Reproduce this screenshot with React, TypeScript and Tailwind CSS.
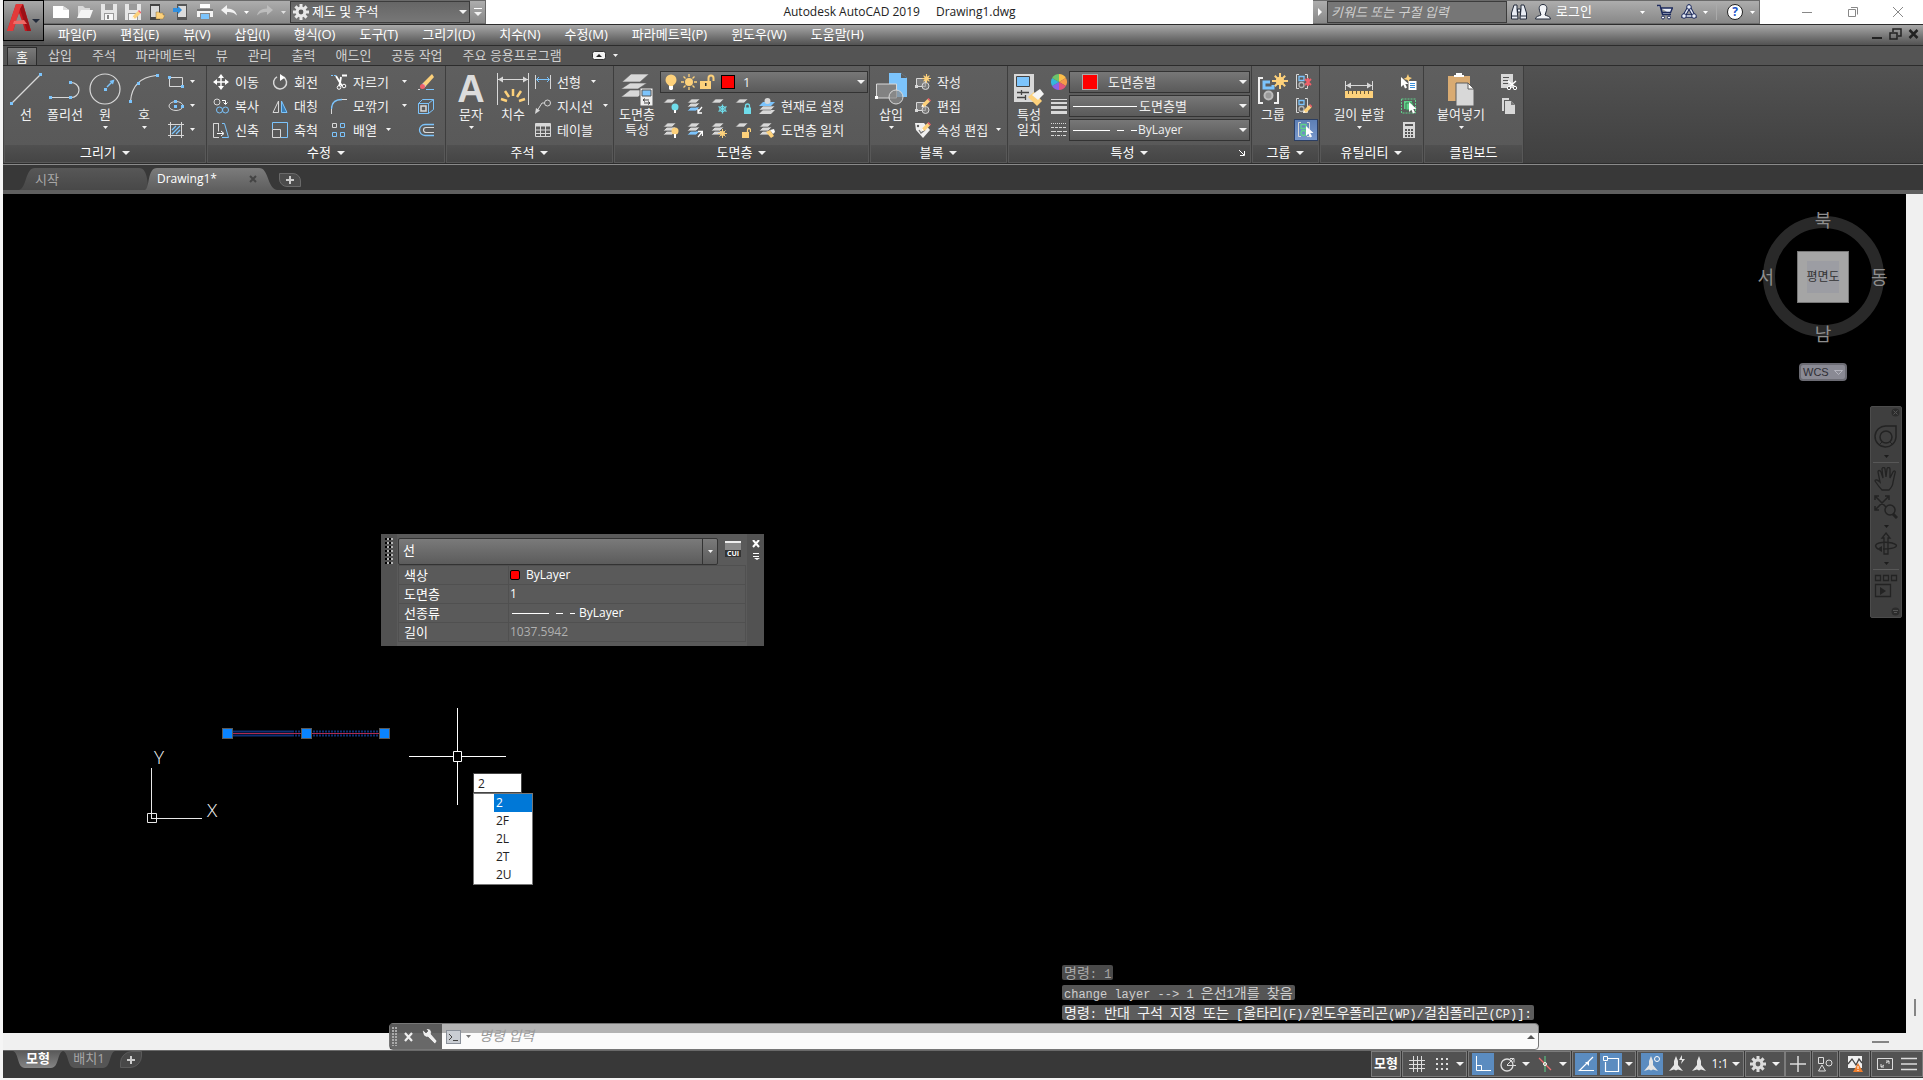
import type { ReactNode } from 'react';
import { clsx } from 'clsx';

const BLUE = '#7cc4fc';
const LIGHT = '#d8d8d8';
const GOLD = '#fdd17b';
const GREEN = '#5fd38a';
const CYAN = '#6fdcea';

/* ---------- drawing helpers ---------- */

function Svg({ w = 16, h = 16, className, children }: { w?: number; h?: number; className?: string; children: ReactNode }) {
  return (
    <svg width={w} height={h} viewBox={`0 0 ${w} ${h}`} fill="none" className={clsx('shrink-0', className)} aria-hidden="true">
      {children}
    </svg>
  );
}

function Caret({ big = false, className = 'text-[#f2f2f2]' }: { big?: boolean; className?: string }) {
  return big ? (
    <Svg w={8} h={4} className={className}><path d="M0 0h8L4 4z" fill="currentColor" /></Svg>
  ) : (
    <Svg w={5} h={3} className={className}><path d="M0 0h5L2.5 3z" fill="currentColor" /></Svg>
  );
}

function Gear({ color = '#f0f0f0', size = 16 }: { color?: string; size?: number }) {
  return (
    <svg width={size} height={size} viewBox="0 0 16 16" className="shrink-0" aria-hidden="true">
      <g stroke={color} strokeWidth="3">
        <path d="M8 0v16M0 8h16M2.4 2.4l11.2 11.2M13.6 2.4L2.4 13.6" />
      </g>
      <circle cx="8" cy="8" r="5.4" fill={color} />
      <circle cx="8" cy="8" r="2.4" fill="#5a5a5a" />
    </svg>
  );
}

function Pencil({ x = 0, y = 0 }: { x?: number; y?: number }) {
  return (
    <g transform={`translate(${x} ${y})`}>
      <path d="M1 6l5-5 2.500 2.500-5 5L0 9z" fill={GOLD} />
      <path d="M6 1l1-1 2.500 2.500-1 1z" fill="#f0606a" />
      <path d="M0 9l.8-2.400L2.600 8.400z" fill="#fff" />
    </g>
  );
}

function Star({ cx, cy, r }: { cx: number; cy: number; r: number }) {
  return (
    <g stroke={GOLD} strokeWidth={r / 4}>
      <path d={`M${cx} ${cy - r}v${2 * r}M${cx - r} ${cy}h${2 * r}`} />
      <path d={`M${cx - r * 0.65} ${cy - r * 0.65}l${r * 1.3} ${r * 1.3}M${cx + r * 0.65} ${cy - r * 0.65}l${-r * 1.3} ${r * 1.3}`} />
      <circle cx={cx} cy={cy} r={r * 0.4} fill={GOLD} />
    </g>
  );
}

function Cursor({ x, y }: { x: number; y: number }) {
  return <path transform={`translate(${x} ${y})`} d="M0 0v10l2.400-2.200L4 11.500l2-.9-1.700-3.600H7.500z" fill="#fff" />;
}

/* Stack of sheets shared by the layer tools. */
function Sheets({ count = 3, blue = false }: { count?: number; blue?: boolean }) {
  return (
    <g>
      {count > 2 && <path d="M4 9h9l-4 4H0z" fill={blue ? BLUE : LIGHT} stroke="#5c5c5c" strokeWidth=".8" />}
      {count > 1 && <path d="M4 5h9l-4 4H0z" fill={LIGHT} stroke="#5c5c5c" strokeWidth=".8" />}
      <path d="M4.500 1H13L9 5H.5z" fill={LIGHT} stroke="#5c5c5c" strokeWidth=".6" />
    </g>
  );
}

/* ---------- quick access toolbar ---------- */

const quickIcons: { label: string; icon: ReactNode }[] = [
  { label: '새로 만들기', icon: <Svg><path d="M0 2h10l6 4v8H0z" fill="#fff" /><path d="M10 2v4h6z" fill="#ddd" /></Svg> },
  { label: '열기', icon: <Svg><path d="M1 14V2h5l2 2h5v2" fill="#d9d9d9" /><path d="M0 14L4 6h12l-3 8z" fill="#f4f4f4" /></Svg> },
  { label: '저장', icon: <Svg><path d="M0 0h16v16H0z" fill="#e6e6e6" /><path d="M4 0h8v6H4zM3 9h10v7H3z" fill="#9a9a9a" /><path d="M4 10h8v6H4z" fill="#f7f7f7" /><path d="M6 11h2v4H6z" fill="#888" /></Svg> },
  { label: '다른 이름으로 저장', icon: <Svg><path d="M0 0h16v16H0z" fill="#e6e6e6" /><path d="M4 0h8v6H4zM3 9h10v7H3z" fill="#9a9a9a" /><path d="M4 10h8v6H4z" fill="#f7f7f7" /><Pencil x={7} y={6} /></Svg> },
  { label: '모바일에서 열기', icon: <Svg><path d="M1 0h10v16H1z" fill="#444" /><path d="M2 2h8v11H2z" fill="#d9d9d9" /><path d="M7 15V8h3l1 1h3v2h2l-2 4z" fill={GOLD} stroke="#8a7040" strokeWidth=".5" /></Svg> },
  { label: '모바일에 저장', icon: <Svg><path d="M4 0h10v16H4z" fill="#555" /><path d="M5 2h8v11H5z" fill="#dcdcdc" /><path d="M0 4h5V2l4 4-4 4V8H0z" fill="#2f8fe0" /></Svg> },
  { label: '플롯', icon: <Svg><path d="M3 0h10v4H3z" fill="#fff" /><path d="M0 5h16v8H0z" fill="#f4f4f4" /><path d="M0 5h16v2H0z" fill="#777" /><path d="M3 9h10v7H3z" fill="#888" /><path d="M4 10h8v5H4z" fill={BLUE} /></Svg> },
];

const undoPath = 'M0 6l6-5v3.500c6 0 9 3 10 7-2.500-2.500-5-3.500-10-3.500V11z';

function TitleBar() {
  return (
    <div className="flex h-6 items-stretch bg-white">
      <div className="flex w-[442px] items-center border-b border-r border-t border-[#6a6a6a] bg-linear-to-b from-[#adadad] to-[#888]">
        <div className="flex items-center gap-2 pl-[9px]">
          {quickIcons.map((q) => (
            <button key={q.label} type="button" aria-label={q.label} className="w-4">{q.icon}</button>
          ))}
          <button type="button" aria-label="명령 취소" className="w-4"><Svg><path d={undoPath} fill="#f2f2f2" /></Svg></button>
        </div>
        <Caret className="ml-[7px] text-white" />
        <button type="button" aria-label="명령 복구" className="ml-2"><Svg><path d={undoPath} transform="matrix(-1 0 0 1 16 0)" fill="#bdbdbd" /></Svg></button>
        <Caret className="ml-2 text-[#e0e0e0]" />
        <label className="ml-1 flex h-[22px] w-[180px] items-center border border-[#3c3c3c] bg-linear-to-b from-[#666] to-[#777] pl-0.5 pr-0.5">
          <Gear color="#e8e8e8" />
          <select aria-label="작업공간" className="ml-[3px] flex-1 appearance-none bg-transparent text-white outline-none">
            <option>제도 및 주석</option>
          </select>
          <Caret big />
        </label>
        <button type="button" aria-label="빠른 접근 도구막대 사용자화" className="flex flex-1 flex-col items-center gap-[3px]">
          <span className="h-px w-2 bg-white" />
          <Caret big />
        </button>
      </div>
      <div className="flex flex-1 items-center justify-center gap-4 text-xs text-[#222]">
        <span>Autodesk AutoCAD 2019</span>
        <span>Drawing1.dwg</span>
      </div>
      <div className="flex w-[447px] items-center border-t border-b border-r border-[#6a6a6a] bg-linear-to-b from-[#adadad] to-[#888]">
        <Svg w={14} h={10}><path d="M5 1v8l4-4z" fill="#fff" /></Svg>
        <input
          type="search"
          aria-label="검색"
          placeholder="키워드 또는 구절 입력"
          className="h-[22px] w-[180px] border border-[#3c3c3c] bg-[#767676] px-[3px] pb-px italic text-white outline-none placeholder:text-[#cfcfcf]"
        />
        <button type="button" aria-label="찾기" className="ml-1">
          <Svg><g fill="#e9edf5" stroke="#222a3a"><path d="M3 1h3v4l1 10H.5V9zM13 1h-3v4L9 15h6.500V9z" /><path d="M6.500 5h3v3h-3z" /></g><path d="M1 12h5M10 12h5" stroke="#222a3a" /></Svg>
        </button>
        <button type="button" className="ml-2 flex items-center gap-[5px] text-white">
          <Svg><path d="M.5 15c0-3 4-3 5.500-4L5 8C3 3 5 .5 8 .5S13 3 11 8l-1 3c1.500 1 5.500 1 5.500 4z" fill="#f2f4f8" stroke="#222a3a" /></Svg>
          로그인
        </button>
        <Caret className="ml-auto text-white" />
        <button type="button" aria-label="앱 스토어" className="ml-3">
          <Svg><path d="M0 1.500h3l2.500 9H14M4 4h11.500l-2 4.500H5z" fill="#e8edf8" stroke="#1d2a5c" strokeWidth="1.400" /><circle cx="6" cy="13.500" r="1.500" fill="#fff" stroke="#1d2a5c" /><circle cx="12" cy="13.500" r="1.500" fill="#fff" stroke="#1d2a5c" /></Svg>
        </button>
        <button type="button" aria-label="연결 유지" className="ml-2">
          <Svg><path d="M8 3L3 12h10z" stroke="#1d2a5c" strokeWidth="3.500" /><path d="M8 3L3 12h10z" stroke="#e8edf8" strokeWidth="1.500" /><g fill="#e8edf8" stroke="#1d2a5c"><circle cx="8" cy="3" r="2.300" /><circle cx="3" cy="12" r="2.300" /><circle cx="13" cy="12" r="2.300" /></g></Svg>
        </button>
        <Caret className="ml-1.5 text-white" />
        <span className="ml-2 h-4 w-px bg-[#aaa]" />
        <button type="button" aria-label="도움말" className="ml-2.5 flex size-4 items-center justify-center rounded-full border border-[#222] bg-white text-xs font-bold text-[#1c54c8]">?</button>
        <Caret className="ml-[7px] mr-1 text-white" />
      </div>
      <div className="flex w-[163px] items-center justify-between pl-[41px] pr-[19px]">
        <button type="button" aria-label="최소화"><Svg w={12} h={12}><path d="M1 6.500h10" stroke="#888" /></Svg></button>
        <button type="button" aria-label="이전 크기로"><Svg w={12} h={12}><path d="M1.500 3.500h7v7h-7z M4 1.500h6.500v7" stroke="#888" /></Svg></button>
        <button type="button" aria-label="닫기"><Svg w={12} h={12}><path d="M1 1l10 10M11 1L1 11" stroke="#888" /></Svg></button>
      </div>
    </div>
  );
}

const menus = ['파일(F)', '편집(E)', '뷰(V)', '삽입(I)', '형식(O)', '도구(T)', '그리기(D)', '치수(N)', '수정(M)', '파라메트릭(P)', '윈도우(W)', '도움말(H)'];

function Header() {
  return (
    <header className="relative flex border-b border-[#2c2c2c] bg-[#545454]">
      <button type="button" aria-label="응용프로그램 메뉴" className="z-10 flex h-[41px] w-[41px] shrink-0 items-center gap-1 border border-black bg-linear-to-b from-[#a8a8a8] to-[#5c5c5c] pb-1.5 pl-[3px]">
        <Svg w={25} h={30}>
          <path d="M0 28L9 1h7l8 27h-6l-2-7-7-2-3 9z" fill="#c8181f" />
          <path d="M9 1h7l-3 5-7 22H0z" fill="#e23a3a" />
          <path d="M16 1l8 27h-4L13 6z" fill="#9c1016" />
          <path d="M12 10l3 8H9z" fill="#8c8c8c" />
          <path d="M7 18l10-1 3 4H6z" fill="#ef6a66" />
        </Svg>
        <Caret big className="-ml-1 mt-1.5 text-[#222a3a]" />
      </button>
      <div className="flex min-w-0 flex-1 flex-col">
        <TitleBar />
        <nav className="flex h-[21px] items-center gap-6 border-t border-[#2c2c2c] bg-linear-to-b from-[#a9a9a9] to-[#525252] pb-0.5 pl-3.5 pr-1 leading-[18px] text-white">
          {menus.map((m) => (
            <button key={m} type="button" className="whitespace-nowrap">{m}</button>
          ))}
          <div className="ml-auto flex items-center gap-1.5">
            <button type="button" aria-label="도면 최소화"><Svg w={11} h={12}><path d="M0 9h10v2H0z" fill="#222" /></Svg></button>
            <button type="button" aria-label="도면 이전 크기로"><Svg w={13} h={12}><path d="M1 5h7v6H1zM4 4V1h8v7H9" stroke="#222" strokeWidth="1.500" /></Svg></button>
            <button type="button" aria-label="도면 닫기"><Svg w={11} h={12}><path d="M1.500 2l8 8M9.500 2l-8 8" stroke="#222" strokeWidth="2.500" /></Svg></button>
          </div>
        </nav>
      </div>
    </header>
  );
}

const ribbonTabs = ['삽입', '주석', '파라메트릭', '뷰', '관리', '출력', '애드인', '공동 작업', '주요 응용프로그램'];

function RibbonTabs() {
  return (
    <div role="tablist" className="flex h-5 items-center border-b border-[#2c2c2c] bg-[#545454] pl-1 leading-[18px] text-[#d0d0d0]">
      <button type="button" role="tab" aria-selected="true" className="h-[18px] w-[30px] self-end border border-b-0 border-[#2c2c2c] bg-linear-to-b from-[#7a7a7a] to-[#5c5c5c] leading-[14px] text-white">홈</button>
      <div className="ml-[11px] flex gap-5 pb-0.5">
        {ribbonTabs.map((t) => (
          <button key={t} type="button" role="tab" aria-selected="false" className="whitespace-nowrap">{t}</button>
        ))}
      </div>
      <button type="button" aria-label="리본 최소화" className="ml-[30px] flex items-center gap-[7px]">
        <Svg w={14} h={9}><rect x=".5" y=".5" width="13" height="8" rx="2" fill="#f2f2f2" stroke="#333" /><path d="M4 6l3-3 3 3z" fill="#222" /></Svg>
        <Caret />
      </button>
    </div>
  );
}

/* ---------- ribbon ---------- */

function Panel({ title, width, caret = true, corner = false, children }: { title: string; width: string; caret?: boolean; corner?: boolean; children: ReactNode }) {
  return (
    <section className={clsx('flex shrink-0 flex-col border-r border-[#3e3e3e]', width)}>
      <div className="flex h-[79px] bg-linear-to-b from-[#5f5f5f] to-[#595959] pt-1">{children}</div>
      <div className="flex h-[18px] items-center border border-t-0 border-[#585858] bg-linear-to-b from-[#505050] to-[#454545] pb-0.5 text-white">
        <span className="w-3" />
        <button type="button" className="flex flex-1 items-center justify-center gap-1.5 leading-[15px]">
          {title}
          {caret && <Caret big />}
        </button>
        <span className="w-3">
          {corner && <Svg w={8} h={8}><path d="M1 1l5 5M6.500 2v4.500H2" stroke="#fff" /></Svg>}
        </span>
      </div>
    </section>
  );
}

function BigTool({ icon, lines, caret = false, width }: { icon: ReactNode; lines: string[]; caret?: boolean; width: string }) {
  return (
    <button type="button" className={clsx('flex shrink-0 flex-col items-center text-[#f2f2f2]', width)}>
      <span className="flex h-[37px] items-center">{icon}</span>
      {lines.map((l) => (
        <span key={l} className="whitespace-nowrap leading-[15px]">{l}</span>
      ))}
      {caret && <Caret className="mt-1" />}
    </button>
  );
}

function Tool({ icon, label, name, caret = false, gap = 'gap-3' }: { icon: ReactNode; label?: string; name?: string; caret?: boolean; gap?: string }) {
  return (
    <button type="button" aria-label={label ?? name} className="flex h-6 items-center gap-1.5 whitespace-nowrap leading-4 text-[#f2f2f2]">
      {icon}
      <span className={clsx('flex items-center pb-px', gap)}>
        {label}
        {caret && <Caret />}
      </span>
    </button>
  );
}

function Dot({ x, y, color = BLUE }: { x: number; y: number; color?: string }) {
  return <rect x={x} y={y} width="3" height="3" fill={color} />;
}

function DrawPanel() {
  return (
    <Panel title="그리기" width="w-[203px]">
      <BigTool width="w-10 pl-1" lines={['선']} icon={<Svg w={32} h={32}><path d="M2.500 29.500l27-27" stroke={LIGHT} strokeWidth="1.200" /><Dot x={0} y={29} /><Dot x={29} y={0} /></Svg>} />
      <BigTool width="w-[42px]" lines={['폴리선']} icon={<Svg w={32} h={32}><path d="M2 24.500h20M22 9.500c4 0 8 3 8 7.500s-4 7.500-8 7.500" stroke={LIGHT} strokeWidth="1.200" /><Dot x={0} y={23} /><Dot x={20} y={23} /><Dot x={20} y={8} /></Svg>} />
      <BigTool width="w-[38px]" caret lines={['원']} icon={<Svg w={32} h={32}><circle cx="16" cy="16" r="15" stroke={LIGHT} strokeWidth="1.200" /><path d="M18 14l6-6" stroke={BLUE} strokeWidth="1.500" /><path d="M25.500 6.500l-5 1.500 3.500 3.500z" fill={BLUE} /><Dot x={15} y={15} /></Svg>} />
      <BigTool width="w-10" caret lines={['호']} icon={<Svg w={32} h={32}><path d="M2.500 28C4 12 14 4 28 2.500" stroke={LIGHT} strokeWidth="1.200" /><Dot x={1} y={27} /><Dot x={9} y={9} /><Dot x={28} y={1} /></Svg>} />
      <div className="ml-1 flex flex-col">
        <Tool name="직사각형" caret icon={<Svg><path d="M1.500 3.500h13v9h-13z" stroke={LIGHT} /><Dot x={0} y={2} /><Dot x={13} y={11} /></Svg>} />
        <Tool name="타원" caret icon={<Svg><ellipse cx="8" cy="8" rx="7" ry="4.500" stroke={LIGHT} /><Dot x={6} y={7} /><Dot x={6} y={2} /><Dot x={13} y={7} /></Svg>} />
        <Tool name="해치" caret icon={<Svg><path d="M2.500 0v16M13.500 0v16M0 2.500h16M0 13.500h16" stroke={LIGHT} /><path d="M4 8l4-4M4 12l8-8M8 12l4-4" stroke={BLUE} strokeWidth="1.300" /></Svg>} />
      </div>
    </Panel>
  );
}

function ModifyPanel() {
  return (
    <Panel title="수정" width="w-[239px]">
      <div className="ml-1.5 grid grid-cols-[59px_59px_87px_16px] content-start">
        <Tool label="이동" icon={<Svg><path d="M8 2v12M2 8h12" stroke="#fff" strokeWidth="1.400" /><path d="M8 0l3 4H5zM8 16l3-4H5zM0 8l4-3v6zM16 8l-4-3v6z" fill="#fff" /></Svg>} />
        <Tool label="회전" icon={<Svg><path d="M11.500 3A6.500 6.500 0 1 1 5 2.800" stroke={LIGHT} strokeWidth="1.500" /><path d="M8 0l5 3.500L8 7z" fill="#fff" /></Svg>} />
        <Tool label="자르기" caret gap="gap-[13px]" icon={<Svg><path d="M0 1.500h6" stroke={BLUE} strokeDasharray="2 1" /><path d="M11 1.500h5M5 2l6 10M10 3L9 9l-1 3" stroke="#fff" strokeWidth="1.800" /><circle cx="8" cy="13.500" r="1.800" stroke="#fff" /><circle cx="13" cy="12" r="1.800" stroke="#fff" /></Svg>} />
        <Tool name="지우기" icon={<Svg><path d="M5 9L14 0l2 3-8 9z" fill={GOLD} /><path d="M5 9l3 3-2 2-3-2z" fill="#fff" /><circle cx="4.500" cy="12.500" r="2.500" fill="#f0606a" /><path d="M8 15.500h8" stroke={BLUE} /><path d="M0 15.500h2" stroke={LIGHT} /></Svg>} />
        <Tool label="복사" icon={<Svg><circle cx="4" cy="4" r="3" stroke={LIGHT} /><circle cx="6.500" cy="12" r="3" stroke={BLUE} /><circle cx="12.500" cy="12" r="3" stroke={BLUE} /><path d="M9 2.500h3.500V6M10.500 4.500l2 2 2-2" stroke="#fff" /></Svg>} />
        <Tool label="대칭" icon={<Svg><path d="M6.500 3v11.500H1z" stroke={LIGHT} /><path d="M9.500 3v11.500H15z" fill="#3d7fb5" stroke={BLUE} /></Svg>} />
        <Tool label="모깎기" caret gap="gap-[13px]" icon={<Svg><path d="M.5 16v-5M11 1.500h5" stroke={LIGHT} /><path d="M.5 11C.5 5 4 1.500 11 1.500" stroke={BLUE} strokeWidth="1.300" /></Svg>} />
        <Tool name="분해" icon={<Svg><path d="M.5 5.500h10v10H.5z" stroke={BLUE} /><path d="M3 8h5v5H3z" stroke={LIGHT} strokeWidth="1.500" /><path d="M.5 5.500l4-4h11l-5 4M15.500 1.500v10l-5 4" stroke={BLUE} /></Svg>} />
        <Tool label="신축" icon={<Svg><path d="M6 1.500H.5v14H6M.5 1.500h5v8" stroke={LIGHT} /><path d="M9 1.500h2.500l4 14H9" stroke={BLUE} /><path d="M4 11.500h6M8 9l3 2.500L8 14" stroke="#fff" /></Svg>} />
        <Tool label="축척" icon={<Svg><path d="M.5 7V.5h15v15H9" stroke={BLUE} /><path d="M.5 7.500h8v8h-8z" stroke={LIGHT} /></Svg>} />
        <Tool label="배열" caret gap="gap-[9px]" icon={<Svg><path d="M1.500 1.500h4v4h-4z" stroke={LIGHT} /><path d="M9.500 1.500h4v4h-4zM1.500 10.500h4v4h-4zM9.500 10.500h4v4h-4z" stroke={BLUE} /></Svg>} />
        <Tool name="간격띄우기" icon={<Svg><path d="M16 2.500H7a5.500 5.500 0 0 0 0 11h9" stroke={BLUE} strokeWidth="1.300" /><path d="M16 5.500H8a2.500 2.500 0 0 0 0 5h8" stroke={LIGHT} strokeWidth="1.200" /></Svg>} />
      </div>
    </Panel>
  );
}

function AnnotatePanel() {
  return (
    <Panel title="주석" width="w-[168px]">
      <BigTool width="w-[50px]" caret lines={['문자']} icon={<span className="font-['Liberation_Sans',sans-serif] text-[38px] font-bold leading-none text-[#dcdcdc]">A</span>} />
      <BigTool width="w-[34px]" lines={['치수']} icon={<Svg w={32} h={32}><path d="M.5 0v32M31.500 0v32M1 6.500h30" stroke={LIGHT} /><path d="M1 6.500l5-3v6zM31 6.500l-5-3v6z" fill={LIGHT} /><path d="M16 16v7M8 18l4 6M24 18l-4 6M4 26l6 2M28 26l-6 2" stroke={GOLD} strokeWidth="2.500" /></Svg>} />
      <div className="ml-[5px] flex flex-col">
        <Tool label="선형" caret gap="gap-2.5" icon={<Svg><path d="M.5 1v14M15.500 1v14" stroke={LIGHT} /><path d="M2 5.500h12M4 3L1.500 5.500 4 8M12 3l2.500 2.500L12 8" stroke={BLUE} /></Svg>} />
        <Tool label="지시선" caret gap="gap-2.5" icon={<Svg><circle cx="12.500" cy="5" r="3" stroke={LIGHT} /><path d="M9.500 5H7L2 13" stroke={LIGHT} /><path d="M0 16l1-6 4 2.500z" fill={LIGHT} /></Svg>} />
        <Tool label="테이블" icon={<Svg><path d="M.5 1.500h15v13H.5z" stroke={LIGHT} /><path d="M1 2h14v2.500H1z" fill={LIGHT} /><path d="M1 8h14M1 11.500h14M5.500 4v10M10.500 4v10" stroke={LIGHT} /></Svg>} />
      </div>
    </Panel>
  );
}

function Bulb() {
  return (
    <Svg>
      <circle cx="8" cy="6" r="5.500" fill={GOLD} /><path d="M5 9h6l-1 3H6z" fill={GOLD} /><path d="M6 12h4v3l-1 1H7l-1-1z" fill="#fff" />
    </Svg>
  );
}

const layerTools: { name: string; icon: ReactNode }[][] = [
  [
    { name: '끄기', icon: <Svg><Sheets count={1} /><circle cx="12" cy="9" r="3.500" fill={CYAN} /><path d="M11 12h2v3h-2z" fill="#fff" /></Svg> },
    { name: '분리', icon: <Svg><Sheets blue /><path d="M15 9l-4 5M11 11v4h4" stroke="#fff" strokeWidth="1.300" /></Svg> },
    { name: '동결', icon: <Svg><Sheets count={1} /><path d="M11.500 6.500v9M7.500 8.500l8 5M15.500 8.500l-8 5" stroke={CYAN} strokeWidth="1.300" /><circle cx="11.500" cy="11" r="2.800" stroke={CYAN} /></Svg> },
    { name: '잠금', icon: <Svg><Sheets count={1} /><path d="M9 9.500h7V16H9z" fill={CYAN} /><path d="M10.500 10V8a2 2 0 0 1 4 0v2" stroke={CYAN} strokeWidth="1.300" /></Svg> },
  ],
  [
    { name: '켜기', icon: <Svg><Sheets /><circle cx="12" cy="9" r="3.500" fill={GOLD} /><path d="M11 12h2v4h-2z" fill="#fff" /></Svg> },
    { name: '분리 해제', icon: <Svg><Sheets blue /><path d="M11 15l4-5M11 9.500h4.500V14" stroke="#fff" strokeWidth="1.300" /></Svg> },
    { name: '동결 해제', icon: <Svg><Sheets /><path d="M11.500 7v9M7 11.500h9M8.500 8.500l6 6M14.500 8.500l-6 6" stroke={GOLD} /><circle cx="11.500" cy="11.500" r="2.500" fill={GOLD} /></Svg> },
    { name: '잠금 해제', icon: <Svg><Sheets count={1} /><path d="M7 10h7v6H7z" fill={GOLD} /><path d="M12.500 10V8a1.500 1.500 0 0 1 3 0v2" stroke={GOLD} strokeWidth="1.300" /></Svg> },
  ],
];

function ComboBox({ label, lead, value, className, indent = 'pl-1' }: { label: string; lead: ReactNode; value: string; className: string; indent?: string }) {
  return (
    <label className={clsx('flex h-[22px] items-center border border-[#333] bg-linear-to-b from-[#777] to-[#5a5a5a] pr-0.5 text-[#f0f0f0]', className)}>
      {lead}
      <select aria-label={label} className={clsx('min-w-0 flex-1 appearance-none bg-transparent pb-px leading-[18px] outline-none', indent)}>
        <option>{value}</option>
      </select>
      <Caret big />
    </label>
  );
}

function LayerPanel() {
  return (
    <Panel title="도면층" width="w-64">
      <BigTool
        width="w-[46px]"
        lines={['도면층', '특성']}
        icon={<Svg w={34} h={34}><path d="M11 2h18l-9 8H2zM10 11h17l-9 6H1zM10 18h17l-9 7H1z" fill={LIGHT} stroke="#5c5c5c" strokeWidth=".6" /><path d="M20 16h13v18H20z" fill="#f0f0f0" stroke="#5c5c5c" /><path d="M22 18h9v6h-9z" fill={BLUE} stroke="#555" /><path d="M23 28h6M24 31h6M25 26.500L23 28l2 1.500M28 29.500l2 1.500-2 1.500" stroke="#444" /></Svg>}
      />
      <div className="flex flex-col">
        <ComboBox
          label="도면층"
          value="1"
          indent="pl-2"
          className="mb-px mt-px w-[208px] pl-0.5"
          lead={
            <span className="flex items-center gap-0.5">
              <Bulb />
              <Svg><circle cx="8" cy="8" r="4" fill={GOLD} /><path d="M8 0v3M8 13v3M0 8h3M13 8h3M2.500 2.500l2 2M11.500 11.500l2 2M13.500 2.500l-2 2M4.500 11.500l-2 2" stroke={GOLD} strokeWidth="1.300" /></Svg>
              <Svg><path d="M1 7h11v8H1z" fill={GOLD} /><path d="M9.500 7V4a2.500 2.500 0 0 1 5 0v3" stroke={GOLD} strokeWidth="2" /><path d="M6 9h1.500v3H6z" fill="#333" /></Svg>
              <span className="ml-1 size-3.5 border border-black bg-[#ff0000]" />
            </span>
          }
        />
        {layerTools.map((row, i) => (
          <div key={row[0].name} className="flex items-center gap-2 pl-[3px]">
            {row.map((t) => (
              <button key={t.name} type="button" aria-label={t.name}>{t.icon}</button>
            ))}
            {i === 0 ? (
              <Tool label="현재로 설정" icon={<Svg><path d="M4 12h12l-4 4H0z" fill={LIGHT} /><path d="M4 8h12l-4 4H0z" fill={LIGHT} stroke="#5c5c5c" strokeWidth=".6" /><path d="M4 4h12l-4 4H0z" fill={BLUE} /><circle cx="8.500" cy="3" r="3" fill={LIGHT} /></Svg>} />
            ) : (
              <Tool label="도면층 일치" icon={<Svg><Sheets /><path d="M7 10l4-2 4 6-3 2z" fill={GOLD} /><path d="M11 8l4-1 1 3-2 2z" fill="#fff" /></Svg>} />
            )}
          </div>
        ))}
      </div>
    </Panel>
  );
}

function MiniBlock({ extra }: { extra: ReactNode }) {
  return <Svg><path d="M1.500 4.500h9v8h-9z" fill="#7d7d7d" stroke={LIGHT} /><circle cx="10.500" cy="12" r="3.500" fill="#8a8a8a" fillOpacity=".6" stroke={LIGHT} /><path d="M0 11h3v3H0z" fill={LIGHT} />{extra}</Svg>;
}

function BlockPanel() {
  return (
    <Panel title="블록" width="w-[138px]">
      <BigTool
        width="w-[42px]"
        caret
        lines={['삽입']}
        icon={<Svg w={32} h={34}><path d="M14 1h12l6 5v19H14z" fill={BLUE} /><path d="M26 1v5h6z" fill="#5c5c5c" /><path d="M1.500 12h20v14h-20z" fill="#828282" stroke={LIGHT} /><circle cx="21" cy="25" r="7" fill="#8a8a8a" fillOpacity=".7" stroke={LIGHT} /><path d="M0 24h3v3H0z" fill="#fff" /></Svg>}
      />
      <div className="ml-[3px] flex flex-col">
        <Tool label="작성" icon={<MiniBlock extra={<Star cx={11.5} cy={4.5} r={4.5} />} />} />
        <Tool label="편집" icon={<MiniBlock extra={<Pencil x={6.5} y={0} />} />} />
        <Tool label="속성 편집" caret gap="gap-2" icon={<Svg><path d="M0 1h9l6 7-7 8-7-8z" fill="#f0f0f0" /><circle cx="3" cy="4" r="1.200" fill="#5c5c5c" /><path d="M4 8l2 3 4-3" stroke="#777" strokeWidth="1.300" /><Pencil x={6.5} y={0} /></Svg>} />
      </div>
    </Panel>
  );
}

function PropertiesPanel() {
  return (
    <Panel title="특성" width="w-[244px]" corner>
      <BigTool
        width="w-[42px]"
        lines={['특성', '일치']}
        icon={<Svg w={32} h={34}><path d="M1 2h20v28H1z" fill={LIGHT} /><path d="M3.500 4.500h13v10h-13z" fill={BLUE} stroke="#444" /><path d="M4 20.500h12M4 25.500h8M8.500 18v5M12.500 23v5" stroke="#444" strokeWidth="1.300" /><path d="M15 25l6-5 8 9-5 5z" fill={GOLD} /><path d="M19 23l5-4 3-2 4 5-6 6z" fill="#f4f4f4" /></Svg>}
      />
      <div className="ml-px grid content-start">
        <div className="flex h-6 items-center gap-0.5">
          <Svg>
            <path d="M8 8V0a8 8 0 0 1 6.900 4z" fill="#fbbd4a" /><path d="M8 8l6.900-4a8 8 0 0 1 0 8z" fill="#f59a4a" /><path d="M8 8l6.900 4A8 8 0 0 1 8 16z" fill="#e2557a" />
            <path d="M8 8v8a8 8 0 0 1-6.900-4z" fill="#8a62e8" /><path d="M8 8L1.100 12a8 8 0 0 1 0-8z" fill="#35b7dd" /><path d="M8 8L1.100 4A8 8 0 0 1 8 0z" fill="#6cc46a" />
          </Svg>
          <ComboBox label="객체 색상" value="도면층별" className="w-[181px]" indent="pl-2.5" lead={<span className="ml-3 size-4 border border-[#aaa] bg-[#ff0000]" />} />
        </div>
        <div className="flex h-6 items-center gap-0.5">
          <Svg><path d="M0 1.500h16" stroke={LIGHT} /><path d="M0 5h16" stroke={LIGHT} strokeWidth="2" /><path d="M0 9.500h16" stroke={LIGHT} strokeWidth="3" /><path d="M0 14.500h16" stroke={LIGHT} strokeWidth="3" /></Svg>
          <ComboBox label="선가중치" value="도면층별" className="w-[181px]" indent="pl-0.5" lead={<span className="ml-[3px] h-px w-16 bg-white" />} />
        </div>
        <div className="flex h-6 items-center gap-0.5">
          <Svg><path d="M0 1.500h16" stroke={LIGHT} strokeDasharray="1 1" /><path d="M0 5.500h16" stroke={LIGHT} strokeDasharray="3 1" /><path d="M0 9.500h16" stroke={LIGHT} strokeDasharray="5 1" /><path d="M0 13.500h16" stroke={LIGHT} strokeDasharray="3 1 1 1" /></Svg>
          <ComboBox label="선종류" value="ByLayer" className="w-[181px] text-xs" indent="pl-px" lead={<Svg w={64} h={3} className="ml-[3px]"><path d="M0 1.500h37M44 1.500h7M58 1.500h6" stroke="#fff" /></Svg>} />
        </div>
      </div>
    </Panel>
  );
}

function GroupGlyph({ color, extra }: { color: string; extra: ReactNode }) {
  return <Svg><path d="M3 .5H.5v14H3M9 .5h2.500v14H9" stroke={LIGHT} /><path d="M3 2.500h5v4H3z" stroke={color} strokeWidth="1.300" /><circle cx="5.500" cy="11" r="2.500" stroke={color === BLUE ? '#b5b5b5' : color} strokeWidth="1.300" />{extra}</Svg>;
}

function GroupPanel() {
  return (
    <Panel title="그룹" width="w-[68px]">
      <BigTool
        width="w-[42px]"
        lines={['그룹']}
        icon={<Svg w={32} h={34}><path d="M6 6H2v25h4M17 31h4V20" stroke="#f0f0f0" strokeWidth="2" /><path d="M13 10H7v6h9v-3" stroke={BLUE} strokeWidth="3" /><circle cx="11.500" cy="23.500" r="4" fill="#999" stroke="#bbb" strokeWidth="2" /><Star cx={23} cy={9} r={8} /></Svg>}
      />
      <div className="flex flex-col">
        <div className="pl-0.5"><Tool name="그룹 해제" icon={<GroupGlyph color={BLUE} extra={<path d="M9 5l6 6M15 5l-6 6M12 4v8" stroke="#f0606a" strokeWidth="1.800" />} />} /></div>
        <div className="pl-0.5"><Tool name="그룹 편집" icon={<GroupGlyph color={BLUE} extra={<Pencil x={7} y={6} />} />} /></div>
        <button type="button" aria-label="그룹 선택 켜기/끄기" aria-pressed="true" className="mt-px flex h-[22px] w-6 items-center justify-center border border-[#2c3f63] bg-linear-to-b from-[#5d7fb5] to-[#7898cc]">
          <GroupGlyph color={GREEN} extra={<Cursor x={8} y={4} />} />
        </button>
      </div>
    </Panel>
  );
}

function UtilityPanel() {
  return (
    <Panel title="유틸리티" width="w-[104px]">
      <BigTool
        width="w-[78px]"
        caret
        lines={['길이 분할']}
        icon={<Svg w={30} h={20}><path d="M1.500 2v9M28.500 2v9M2 6.500h26" stroke={LIGHT} /><path d="M2 6.500l5-3v6zM28 6.500l-5-3v6z" fill={LIGHT} /><path d="M1 12h28v7H1z" fill={GOLD} /><path d="M4.500 12v3M8.500 12v3M12.500 12v3M16.500 12v3M20.500 12v3M24.500 12v3" stroke="#6a5a3a" /></Svg>}
      />
      <div className="ml-[3px] flex flex-col">
        <Tool name="신속 선택" icon={<Svg><path d="M7 0L5.500 3.500 2.500 5l4 1 1 2 1-2.500L11 4 8 3z" fill={GOLD} /><path d="M7.500 7h8v9h-8z" fill="#fff" /><path d="M9 9.500h5M9 11.500h5M9 13.500h5" stroke="#3b8fd9" /><Cursor x={0} y={3} /></Svg>} />
        <Tool name="모두 선택" icon={<Svg><path d="M.5 1h14v14H.5z" stroke={GREEN} strokeDasharray="2 1" /><path d="M3 3h8v8H3z" fill={GREEN} /><path d="M5 5h7v7H5z" fill={GREEN} stroke="#3f7a55" /><Cursor x={8} y={4} /></Svg>} />
        <Tool name="빠른 계산기" icon={<Svg><path d="M2 0h12v16H2z" fill={LIGHT} /><path d="M4 2h8v2H4z" fill="#555" /><path d="M4 7h2v2H4zM7 7h2v2H7zM10 7h2v2h-2zM4 10h2v2H4zM7 10h2v2H7zM10 10h2v2h-2zM4 13h2v2H4zM7 13h2v2H7zM10 13h2v2h-2z" fill="#555" /></Svg>} />
      </div>
    </Panel>
  );
}

function ClipboardPanel() {
  return (
    <Panel title="클립보드" width="w-[100px]" caret={false}>
      <BigTool
        width="w-[74px]"
        caret
        lines={['붙여넣기']}
        icon={<Svg w={28} h={34}><path d="M1 4h22v25H1z" fill="#d9ab72" /><path d="M7 5h10V3h-2V1h-6v2H7z" fill="#fff" /><path d="M9 11h12l6 6v17H9z" fill={LIGHT} stroke="#5c5c5c" /><path d="M21 11v6h6z" fill="#fff" stroke="#5c5c5c" /></Svg>}
      />
      <div className="ml-[3px] flex flex-col">
        <Tool name="잘라내기" icon={<Svg><path d="M0 0h12v14H0z" fill={LIGHT} /><path d="M2 3.500h6M2 6.500h5M2 9.500h5" stroke="#555" /><path d="M7 7l8 7M15 7l-8 7" stroke="#fff" strokeWidth="1.500" /><circle cx="8" cy="14" r="1.700" fill="#5c5c5c" stroke="#fff" /><circle cx="14" cy="14" r="1.700" fill="#5c5c5c" stroke="#fff" /></Svg>} />
        <Tool name="클립보드로 복사" icon={<Svg><path d="M1 0h7v2H3v11H1z" fill={LIGHT} /><path d="M4 3h6l4 4v9H4z" fill={LIGHT} /><path d="M10 3v4h4z" fill="#777" /></Svg>} />
      </div>
    </Panel>
  );
}

function Ribbon() {
  return (
    <div className="border-b border-[#8a8a8a]">
      <div className="flex border-b border-[#2c2c2c] bg-linear-to-b from-[#525252] to-[#404040] pl-px">
        <DrawPanel />
        <ModifyPanel />
        <AnnotatePanel />
        <LayerPanel />
        <BlockPanel />
        <PropertiesPanel />
        <GroupPanel />
        <UtilityPanel />
        <ClipboardPanel />
      </div>
    </div>
  );
}

function FileTabs() {
  return (
    <div role="tablist" className="flex h-[29px] items-end border-b-4 border-[#5f5f5f] bg-[#383838] pl-4">
      <button type="button" role="tab" aria-selected="false" className="h-[22px] w-[130px] bg-linear-to-b from-[#575757] to-[#484848] pl-4 text-left leading-5 text-[#a8a8a8] [clip-path:path('M0,22C8,20_6,0_16,0H120C130,0_128,20_130,22Z')]">시작</button>
      <div className="-ml-1 flex h-[22px] w-[132px] items-center bg-linear-to-b from-[#7c7c7c] to-[#5f5f5f] pl-3 pr-5 text-xs text-white [clip-path:path('M0,22C5,20_2,0_12,0H114C124,0_122,20_132,22Z')]">
        <button type="button" role="tab" aria-selected="true">Drawing1*</button>
        <button type="button" aria-label="탭 닫기" className="ml-auto"><Svg w={8} h={8}><path d="M1 1l6 6M7 1L1 7" stroke="#444" strokeWidth="2" /></Svg></button>
      </div>
      <button type="button" aria-label="새 도면" className="mb-[3px] ml-0.5 flex h-3.5 w-[22px] items-center justify-center rounded-bl-lg rounded-tr-lg border border-[#6a6a6a] bg-[#4c4c4c]">
        <Svg w={8} h={8}><path d="M4 0v8M0 4h8" stroke="#ccc" strokeWidth="2" /></Svg>
      </button>
    </div>
  );
}

/* ---------- drawing area ---------- */

const paletteRows: { name: string; value: ReactNode; muted?: boolean }[] = [
  { name: '색상', value: <><span className="mr-1.5 size-2.5 rounded-xs border border-black bg-[#ff0000]" />ByLayer</> },
  { name: '도면층', value: '1' },
  { name: '선종류', value: <><Svg w={63} h={3} className="ml-0.5 mr-1"><path d="M0 1.500h37M44 1.500h7M58 1.500h5" stroke="#fff" /></Svg>ByLayer</> },
  { name: '길이', value: '1037.5942', muted: true },
];

function QuickProperties() {
  return (
    <section aria-label="빠른 특성" className="absolute left-[378px] top-[340px] flex h-28 w-[383px] bg-[#525252] text-white">
      <div className="flex w-4 justify-center pt-1">
        <Svg w={8} h={27}>
          <path d="M1 0v27M5 0v27" stroke="#000" strokeWidth="2" strokeDasharray="2 2" />
          <path d="M3 0v27M7 0v27" stroke="#b5b5b5" strokeWidth="2" strokeDasharray="2 2" />
        </Svg>
      </div>
      <div className="w-[350px] bg-[#5a5a5a] px-px pt-1">
        <div className="flex items-start">
          <label className="flex h-[27px] w-[320px] items-center rounded-xs border border-[#333] bg-linear-to-b from-[#7a7a7a] to-[#5c5c5c]">
            <select aria-label="객체 유형" className="flex-1 appearance-none self-stretch border-r border-[#333] bg-transparent pb-0.5 pl-1 outline-none">
              <option>선</option>
            </select>
            <span className="flex w-3.5 justify-center"><Caret /></span>
          </label>
          <button type="button" aria-label="사용자화" className="ml-[7px] mt-[3px] flex size-4 flex-col justify-end border-t-2 border-[#eee] bg-[#8a8a8a]">
            <span className="bg-[#333] text-center text-[7px] font-bold leading-[7px]">CUI</span>
          </button>
        </div>
        <table className="w-full border-collapse border border-[#505050]">
          <tbody>
            {paletteRows.map((r) => (
              <tr key={r.name} className="h-[19px] border-b border-[#505050]">
                <th scope="row" className="w-[110px] border-r border-[#505050] p-0 pl-[5px] text-left font-normal leading-[18px]">{r.name}</th>
                <td className={clsx('p-0 pl-px text-xs leading-[18px]', r.muted && 'text-[#b0b0b0]')}>
                  <span className="flex items-center">{r.value}</span>
                </td>
              </tr>
            ))}
          </tbody>
        </table>
      </div>
      <div className="flex flex-1 flex-col items-center gap-1 pt-1.5">
        <button type="button" aria-label="닫기"><Svg w={8} h={8}><path d="M1 0l6 7M7 0L1 7" stroke="#fff" strokeWidth="2" /></Svg></button>
        <button type="button" aria-label="옵션"><Svg w={8} h={8}><path d="M1 1.500h6M1 4.500h6" stroke="#fff" /><path d="M2 6h6L5 8z" fill="#fff" /></Svg></button>
      </div>
    </section>
  );
}

function DynamicInput() {
  return (
    <div className="absolute left-[470px] top-[579px] flex flex-col items-start text-xs text-[#222]">
      <input aria-label="동적 입력" defaultValue="2" className="h-5 w-[49px] border border-[#444] bg-white px-1 outline-none" />
      <ul role="listbox" className="w-[60px] border border-[#777] bg-white">
        {['2', '2F', '2L', '2T', '2U'].map((o, i) => (
          <li key={o} role="option" aria-selected={i === 0} className={clsx('ml-5 h-[18px] pl-0.5 leading-[18px]', i === 0 && 'bg-[#0078d7] text-white')}>
            {o}
          </li>
        ))}
      </ul>
    </div>
  );
}

function DrawingObjects() {
  return (
    <>
      <Svg w={170} h={12} className="absolute left-[219px] top-[534px]">
        <path d="M5 3.500h65M5 7.500h65" stroke="#0e3074" strokeWidth="2" />
        <path d="M70 3.500h90M70 7.500h90" stroke="#0e3074" strokeWidth="2" strokeDasharray="2 1" />
        <path d="M5 5.500h160" stroke="#b02a4e" />
        <g fill="#0a84ff" stroke="#5a5a5a">
          <rect x=".5" y=".5" width="10" height="10" /><rect x="79.500" y=".5" width="10" height="10" /><rect x="157.500" y=".5" width="10" height="10" />
        </g>
      </Svg>
      <Svg w={98} h={98} className="absolute left-[406px] top-[514px]">
        <path d="M48.500 0v43M48.500 54v43M0 48.500h44M53 48.500h44M44.500 43.500h8v10h-8z" stroke="#fff" />
      </Svg>
      <Svg w={84} h={88} className="absolute left-[142px] top-[546px]">
        <path d="M6.500 28v50M6 78.500h51M2.500 73.500h9v9h-9z" stroke="#e8e8e8" />
        <text x="14" y="24" textAnchor="middle" fill="#f4f4f4" className="font-['Open_Sans',sans-serif] text-[19px] font-light">Y</text>
        <text x="67" y="77" textAnchor="middle" fill="#f4f4f4" className="font-['Open_Sans',sans-serif] text-[19px] font-light">X</text>
      </Svg>
    </>
  );
}

function ViewCube() {
  return (
    <div className="absolute right-[17px] top-4 w-[132px] text-[#8e8e8e]">
      <div className="relative mx-auto my-1.5 flex size-[121px] items-center justify-center rounded-full border-[12px] border-[#292929] text-[18px] leading-5">
        <button type="button" className="flex size-[52px] items-center justify-center border border-[#777] bg-[#a5a5a5]">
          <span className="flex size-8 items-center justify-center whitespace-nowrap bg-[#9c9da3] text-xs text-[#333]">평면도</span>
        </button>
        <span className="absolute -top-[18px]">북</span>
        <span className="absolute -bottom-[19px]">남</span>
        <span className="absolute -left-[17px]">서</span>
        <span className="absolute -right-4">동</span>
      </div>
      <button type="button" className="mx-auto mt-[26px] flex h-[18px] w-12 items-center justify-between rounded-sm border-2 border-[#6c6c74] bg-[#8a8a94] px-0.5 font-['Liberation_Sans',sans-serif] text-[11px] leading-3 text-[#2e2e34]">
        WCS
        <Svg w={9} h={5}><path d="M.5.5h8l-4 4z" stroke="#b5b5be" /></Svg>
      </button>
    </div>
  );
}

function NavBar() {
  return (
    <div role="toolbar" aria-label="탐색 막대" className="absolute right-1 top-[212px] flex h-[212px] w-8 flex-col items-center rounded-xs border border-[#4c4c4c] bg-[#3f3f3f] text-[#232323]">
      <button type="button" aria-label="닫기" className="mr-px mt-px self-end"><Svg w={9} h={9}><circle cx="4.500" cy="4.500" r="4" fill="#2c2c2c" /><path d="M2.500 2.500l4 4M6.500 2.500l-4 4" stroke="#555" /></Svg></button>
      <button type="button" aria-label="전체 탐색 휠" className="mt-2"><Svg w={24} h={24}><path d="M12 1h10v11a10.500 10.500 0 1 1-10-11z" stroke="currentColor" strokeWidth="1.500" /><circle cx="12" cy="12" r="6" stroke="currentColor" strokeWidth="1.500" /><path d="M8 17l-3 3M16 17l3 3" stroke="currentColor" /></Svg></button>
      <Caret className="mt-1.5 text-[#1c1c1c]" />
      <span className="mt-1 h-px w-[26px] bg-[#575757]" />
      <button type="button" aria-label="초점이동" className="mt-1"><Svg w={24} h={24}><path d="M8 23C5 20 3 17 1 14c0-2 3-1 5 1L4 5c0-2 2-2 3 0l2 6-1-9c0-2 3-2 3 0l1 8 1-8c0-2 3-2 3 0v9l3-6c1-2 3-1 2 1l-2 9c0 4-2 6-4 8z" stroke="currentColor" strokeWidth="1.300" /></Svg></button>
      <button type="button" aria-label="줌 범위" className="mt-1"><Svg w={24} h={24}><path d="M1 1l14 14M15 1L1 15M1 5V1h4M11 1h4v4M1 11v4h4" stroke="currentColor" strokeWidth="1.500" /><circle cx="16" cy="15" r="5" fill="#3f3f3f" stroke="currentColor" strokeWidth="1.500" /><path d="M19 19l4 4" stroke="currentColor" strokeWidth="3" /></Svg></button>
      <Caret className="mt-1.5 text-[#1c1c1c]" />
      <button type="button" aria-label="궤도" className="mt-1"><Svg w={24} h={24}><path d="M12 1l4 5h-2v16h-4V6H8z" stroke="currentColor" strokeWidth="1.300" /><path d="M4 17c-8-6 6-8 14-6s5 6-9 6" stroke="currentColor" strokeWidth="1.500" /><path d="M3 17l5-3v6z" fill="currentColor" /></Svg></button>
      <Caret className="mt-1.5 text-[#1c1c1c]" />
      <span className="mt-1 h-px w-[26px] bg-[#575757]" />
      <button type="button" aria-label="쇼모션" className="mt-1"><Svg w={24} h={24}><path d="M1.500 1.500h5v5h-5zM9.500 1.500h5v5h-5zM17.500 1.500h5v5h-5zM1.500 10.500h15v12h-15z" stroke="currentColor" strokeWidth="1.300" /><path d="M6 13v8l6-4z" fill="currentColor" /></Svg></button>
      <button type="button" aria-label="옵션" className="mb-px mr-px mt-auto self-end"><Svg w={9} h={9}><circle cx="4.500" cy="4.500" r="4" fill="#2c2c2c" /><path d="M2 3.500h5M3 5.500h3" stroke="#555" /></Svg></button>
    </div>
  );
}

const history = [
  { text: '명령: 1', tone: 'bg-[#4a4a4a] text-[#a8a8a8]' },
  { text: 'change layer --> 1 은선1개를 찾음', tone: 'bg-[#555] text-[#cfcfcf]' },
  { text: '명령: 반대 구석 지정 또는 [울타리(F)/윈도우폴리곤(WP)/걸침폴리곤(CP)]:', tone: 'bg-[#5c5c5c] text-[#f4f4f4]' },
];

/* Latin stays on the narrow console face, Hangul runs one step larger. */
function ConsoleText({ text }: { text: string }) {
  return text.split(/([가-힣]+)/).map((part, i) =>
    i % 2 ? <span key={i} className="font-['Noto_Sans_CJK_KR',sans-serif] text-sm leading-[14px]">{part}</span> : part,
  );
}

function CommandLine() {
  return (
    <div className="absolute bottom-0 left-[386px] right-[384px] flex flex-col">
      <div className="mb-[3px] ml-[673px] flex flex-col items-start gap-[5px] font-['Liberation_Mono',monospace] text-xs">
        {history.map((h) => (
          <p key={h.text} className={clsx('h-[15px] whitespace-pre rounded-xs px-0.5 leading-[14px]', h.tone)}>
            <ConsoleText text={h.text} />
          </p>
        ))}
      </div>
      <div className="flex h-[27px] rounded-sm border border-[#777] bg-white/70">
        <div className="flex w-[52px] items-center bg-[#444]/80 pl-0.5">
          <Svg w={5} h={19}><path d="M1 0v19M4 0v19" stroke="#aaa" strokeWidth="2" strokeDasharray="2 1" /></Svg>
          <button type="button" aria-label="명령행 닫기" className="ml-[7px]"><Svg w={9} h={10}><path d="M1 1l7 8M8 1L1 9" stroke="#eee" strokeWidth="2.200" /></Svg></button>
          <button type="button" aria-label="사용자화" className="ml-[9px]"><Svg w={15} h={15}><path d="M1 1l3 3 2-2-2-2c4-1 6 2 5 5l6 7-2 3-7-7C3 9 0 5 1 1z" fill="#eee" stroke="#444" strokeWidth=".5" /></Svg></button>
        </div>
        <label className="flex flex-1 items-center pl-1">
          <Svg w={15} h={14}><rect x=".5" y=".5" width="14" height="13" fill="#c9cdd3" stroke="#8a9099" /><path d="M3 4l3 3-3 3M7 10.500h5" stroke="#444" /></Svg>
          <Caret className="ml-[5px] text-[#777]" />
          <input aria-label="명령 입력" placeholder="명령 입력" className="ml-2 h-5 flex-1 bg-transparent pb-0.5 text-sm italic text-black outline-none placeholder:text-[#9a9a9a]" />
        </label>
        <button type="button" aria-label="명령 기록" className="mr-[3px] w-2"><Svg w={8} h={4}><path d="M0 4l4-4 4 4z" fill="#555" /></Svg></button>
      </div>
    </div>
  );
}

function DrawingArea() {
  return (
    <main className="relative flex flex-1 flex-col">
      <div className="flex flex-1">
        <div className="relative flex-1 overflow-hidden bg-black">
          <ViewCube />
          <NavBar />
          <DrawingObjects />
          <QuickProperties />
          <DynamicInput />
        </div>
        <div className="flex w-[17px] flex-col items-center justify-end bg-[#f0f0f0] pb-[17px]">
          <span className="h-[17px] w-0.5 bg-[#858585]" />
        </div>
      </div>
      <div className="flex h-[17px] items-center justify-end bg-[#f0f0f0] pr-[34px]">
        <span className="h-0.5 w-[17px] bg-[#858585]" />
      </div>
      <CommandLine />
    </main>
  );
}

/* ---------- status bar ---------- */

function StatusGroup({ width, children }: { width: string; children: ReactNode }) {
  return <div className={clsx('flex h-[26px] items-center justify-around border border-[#7c7c7c] bg-[#525252] px-px', width)}>{children}</div>;
}

function Toggle({ name, on = false, children }: { name: string; on?: boolean; children: ReactNode }) {
  return (
    <button type="button" aria-label={name} aria-pressed={on} className={clsx('flex h-[22px] w-[22px] items-center justify-center', on && 'bg-[#5b8cc0]')}>
      {children}
    </button>
  );
}

function Person({ children }: { children?: ReactNode }) {
  return <Svg w={18} h={18}><path d="M8 1l2 5v4l5 6-5-1.500-2 1-2-1L1 16l5-6V6z" fill="#e4e4e4" />{children}</Svg>;
}

function StatusBar() {
  return (
    <footer className="flex h-7 items-start border-t border-[#6a6a6a] bg-[#383838]">
      <div role="tablist" className="flex pl-2.5 leading-[15px] text-white">
        <button type="button" role="tab" aria-selected="true" className="h-[17px] w-[50px] bg-linear-to-b from-[#5a5a5a] to-[#858585] pb-0.5 font-semibold [clip-path:path('M0,0C6,2_4,17_12,17H38C46,17_44,2_50,0Z')]">모형</button>
        <button type="button" role="tab" aria-selected="false" className="h-[17px] w-[52px] bg-[#555] pb-0.5 text-[#a8a8a8] [clip-path:path('M0,0C6,2_4,17_12,17H40C48,17_46,2_52,0Z')]">배치1</button>
        <button type="button" aria-label="새 배치" className="ml-[5px] flex h-[17px] w-[22px] items-center justify-center rounded-br-xl rounded-tl-xl border border-[#5a5a5a] bg-[#484848]">
          <Svg w={8} h={8}><path d="M4 0v8M0 4h8" stroke="#ccc" strokeWidth="2" /></Svg>
        </button>
      </div>
      <div className="ml-auto flex gap-px">
        <StatusGroup width="w-[30px]"><button type="button" className="whitespace-nowrap pb-0.5 font-semibold leading-5 text-white">모형</button></StatusGroup>
        <StatusGroup width="w-[65px]">
          <Toggle name="그리드"><Svg><path d="M4.500 0v16M8.500 0v16M12.500 0v16M0 4.500h16M0 8.500h16M0 12.500h16" stroke="#ddd" /></Svg></Toggle>
          <Toggle name="스냅"><Svg w={14} h={14}><path d="M1 2h12M1 7h12M1 12h12" stroke="#ddd" strokeWidth="2" strokeDasharray="2 3" /></Svg></Toggle>
          <Caret big />
        </StatusGroup>
        <StatusGroup width="w-[103px]">
          <Toggle name="직교" on><Svg><path d="M1.500 0v14.500H16M1.500 9.500h5v5" stroke="#fff" /></Svg></Toggle>
          <Toggle name="극좌표 추적"><Svg><circle cx="7" cy="9" r="6" stroke="#ddd" strokeWidth="1.300" /><path d="M7 9.500h9M7 9l7-7M10 2.500h4v4" stroke="#ddd" /></Svg></Toggle>
          <Caret big />
          <Toggle name="등각투영 제도"><Svg><path d="M2 2l12 12" stroke="#f07070" strokeWidth="1.200" /><path d="M8 0v16" stroke={GREEN} /><circle cx="8" cy="8" r="1.500" stroke="#fff" /></Svg></Toggle>
          <Caret big />
        </StatusGroup>
        <StatusGroup width="w-16">
          <Toggle name="객체 스냅 추적" on><Svg><path d="M15 1L1.500 14.500H16" stroke="#fff" strokeWidth="1.200" /><path d="M7 6h4v4z" fill="#fff" /></Svg></Toggle>
          <Toggle name="객체 스냅" on><Svg w={18} h={18}><path d="M6 3.500h10.500v13h-13V7" stroke="#fff" strokeWidth="1.200" /><path d="M1.500 1.500h4v4h-4z" stroke="#fff" /></Svg></Toggle>
          <Caret big />
        </StatusGroup>
        <StatusGroup width="w-[107px]">
          <Toggle name="주석 객체 표시" on><Person><circle cx="14" cy="4" r="2.500" stroke="#fff" /></Person></Toggle>
          <Toggle name="자동 축척"><Person><path d="M14 0l-3 5h3l-1 4 4-5h-3z" fill="#e4e4e4" /></Person></Toggle>
          <Person />
          <button type="button" className="flex items-center gap-1 text-xs text-white">1:1<Caret big /></button>
        </StatusGroup>
        <div className="flex">
          <StatusGroup width="w-10"><Gear color="#dcdcdc" /><Caret big /></StatusGroup>
          <StatusGroup width="w-[26px]"><Svg><path d="M8 0v16M0 8h16" stroke="#ddd" strokeWidth="1.500" /></Svg></StatusGroup>
        </div>
        <StatusGroup width="w-[26px]"><Svg><path d="M1.500 1.500h5v6h-5zM5 9l3.500 6h-7z" stroke="#ddd" /><circle cx="12" cy="7" r="3" stroke="#ddd" /></Svg></StatusGroup>
        <StatusGroup width="w-[31px]"><Svg><path d="M1 0h14v12H1z" fill="#f0f0f0" /><path d="M1 8l4-5 4 6 3-6 3 4" stroke="#444" strokeWidth="1.300" /><path d="M11 7l5 9H6z" fill="#ee7e2e" /><path d="M11 10v3M11 14v1" stroke="#fff" /></Svg></StatusGroup>
        <StatusGroup width="w-[52px]">
          <Toggle name="화면 정리"><Svg><path d="M.5 2.500h15v11H.5z" stroke="#ddd" /><path d="M9 7l3-2M12 8V5H9M7 9l-3 2M4 8v3h3" stroke="#ddd" /></Svg></Toggle>
          <Toggle name="사용자화"><Svg><path d="M0 2.500h16M0 8h16M0 13.500h16" stroke="#ddd" strokeWidth="1.500" /></Svg></Toggle>
        </StatusGroup>
      </div>
    </footer>
  );
}

export default function App() {
  return (
    <div className="flex h-screen min-h-[900px] flex-col bg-[#f5f5f5] pb-0.5 pl-[3px] font-['Open_Sans','Noto_Sans_CJK_KR',sans-serif] text-[13px]">
      <Header />
      <RibbonTabs />
      <Ribbon />
      <FileTabs />
      <DrawingArea />
      <StatusBar />
    </div>
  );
}
